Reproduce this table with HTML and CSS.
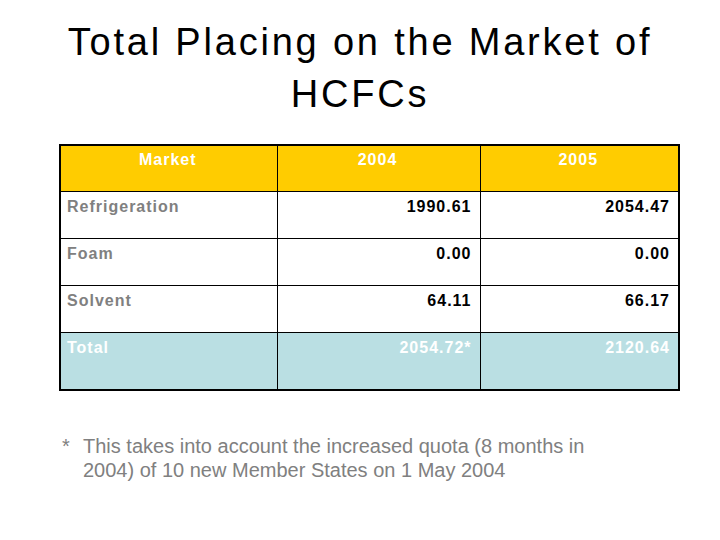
FILE: index.html
```html
<!DOCTYPE html>
<html>
<head>
<meta charset="utf-8">
<link rel="stylesheet" href="styles.css">
</head>
<body>
<div class="slide">
  <h1 class="title">Total Placing on the Market of<br>HCFCs</h1>
  <table class="data">
    <colgroup>
      <col class="c1"><col class="c2"><col class="c3">
    </colgroup>
    <tr class="head">
      <td class="center">Market</td>
      <td class="center">2004</td>
      <td class="center">2005</td>
    </tr>
    <tr class="row">
      <td class="label">Refrigeration</td>
      <td class="num">1990.61</td>
      <td class="num">2054.47</td>
    </tr>
    <tr class="row">
      <td class="label">Foam</td>
      <td class="num">0.00</td>
      <td class="num">0.00</td>
    </tr>
    <tr class="row">
      <td class="label">Solvent</td>
      <td class="num">64.11</td>
      <td class="num">66.17</td>
    </tr>
    <tr class="total">
      <td class="label">Total</td>
      <td class="num">2054.72*</td>
      <td class="num">2120.64</td>
    </tr>
  </table>
  <div class="note">
    <span class="star">*</span>
    <span class="note-text">This takes into account the increased quota (8 months in 2004) of 10 new Member States on 1 May 2004</span>
  </div>
</div>
</body>
</html>
```
FILE: styles.css
```css
html, body {
  margin: 0;
  padding: 0;
  background: #ffffff;
}
.slide {
  width: 720px;
  height: 540px;
  font-family: "Liberation Sans", Arial, sans-serif;
  overflow: hidden;
}
.title {
  margin: 16px 0 0 0;
  font-weight: normal;
  font-size: 38px;
  line-height: 52px;
  letter-spacing: 2.8px;
  text-align: center;
  color: #000000;
}
.data {
  margin: 24px 0 0 59px;
  width: 619px;
  border-collapse: collapse;
  border: 2px solid #000000;
  table-layout: fixed;
}
.c1 { width: 217px; }
.c2 { width: 203px; }
.c3 { width: 199px; }
.data td {
  border: 1px solid #000000;
  vertical-align: top;
  font-size: 16px;
  line-height: 19px;
  font-weight: bold;
  letter-spacing: 1px;
  padding: 5px 8px 0 6px;
  box-sizing: border-box;
}
.head td {
  background: #ffcc00;
  color: #ffffff;
  height: 46px;
  padding-top: 4px;
}
.row td {
  height: 47px;
  background: #ffffff;
}
.total td {
  height: 58px;
  background: #badfe3;
  color: #ffffff;
}
.center { text-align: center; }
.label { color: #808080; text-align: left; }
.total .label { color: #ffffff; }
.num { text-align: right; color: #000000; }
.total .num { color: #ffffff; }
.note {
  display: flex;
  margin: 43px 0 0 62px;
  width: 530px;
  font-size: 20px;
  line-height: 24px;
  color: #808080;
}
.star {
  flex: 0 0 21px;
}
.note-text {
  flex: 1;
}
```
